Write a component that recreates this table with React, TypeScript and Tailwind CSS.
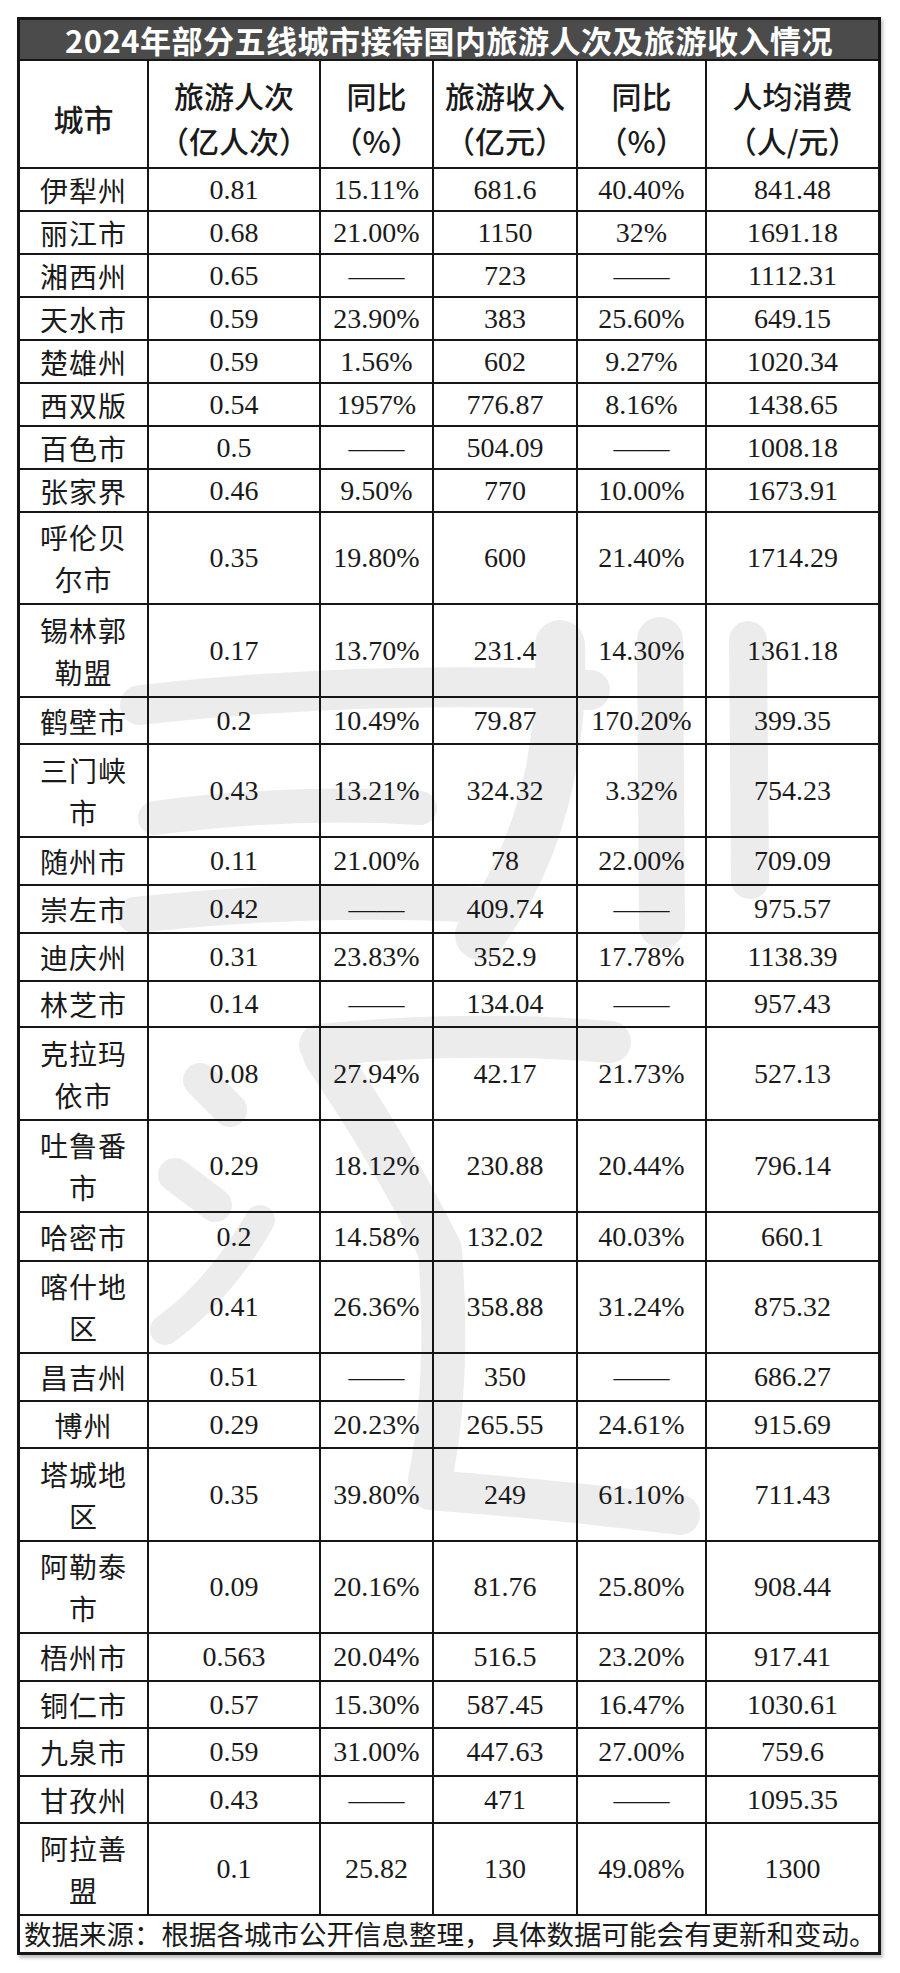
import React from "react";

type Row = { c: string[]; v: string[]; h: string };

const D = "——";

const rows: Row[] = [
  { c: ["伊犁州"], v: ["0.81", "15.11%", "681.6", "40.40%", "841.48"], h: "h-[43px]" },
  { c: ["丽江市"], v: ["0.68", "21.00%", "1150", "32%", "1691.18"], h: "h-[43px]" },
  { c: ["湘西州"], v: ["0.65", D, "723", D, "1112.31"], h: "h-[43px]" },
  { c: ["天水市"], v: ["0.59", "23.90%", "383", "25.60%", "649.15"], h: "h-[43px]" },
  { c: ["楚雄州"], v: ["0.59", "1.56%", "602", "9.27%", "1020.34"], h: "h-[43px]" },
  { c: ["西双版"], v: ["0.54", "1957%", "776.87", "8.16%", "1438.65"], h: "h-[43px]" },
  { c: ["百色市"], v: ["0.5", D, "504.09", D, "1008.18"], h: "h-[43px]" },
  { c: ["张家界"], v: ["0.46", "9.50%", "770", "10.00%", "1673.91"], h: "h-[43px]" },
  { c: ["呼伦贝", "尔市"], v: ["0.35", "19.80%", "600", "21.40%", "1714.29"], h: "h-[92px]" },
  { c: ["锡林郭", "勒盟"], v: ["0.17", "13.70%", "231.4", "14.30%", "1361.18"], h: "h-[93px]" },
  { c: ["鹤壁市"], v: ["0.2", "10.49%", "79.87", "170.20%", "399.35"], h: "h-[47px]" },
  { c: ["三门峡", "市"], v: ["0.43", "13.21%", "324.32", "3.32%", "754.23"], h: "h-[93px]" },
  { c: ["随州市"], v: ["0.11", "21.00%", "78", "22.00%", "709.09"], h: "h-[48px]" },
  { c: ["崇左市"], v: ["0.42", D, "409.74", D, "975.57"], h: "h-[48px]" },
  { c: ["迪庆州"], v: ["0.31", "23.83%", "352.9", "17.78%", "1138.39"], h: "h-[48px]" },
  { c: ["林芝市"], v: ["0.14", D, "134.04", D, "957.43"], h: "h-[46px]" },
  { c: ["克拉玛", "依市"], v: ["0.08", "27.94%", "42.17", "21.73%", "527.13"], h: "h-[93px]" },
  { c: ["吐鲁番", "市"], v: ["0.29", "18.12%", "230.88", "20.44%", "796.14"], h: "h-[92px]" },
  { c: ["哈密市"], v: ["0.2", "14.58%", "132.02", "40.03%", "660.1"], h: "h-[49px]" },
  { c: ["喀什地", "区"], v: ["0.41", "26.36%", "358.88", "31.24%", "875.32"], h: "h-[92px]" },
  { c: ["昌吉州"], v: ["0.51", D, "350", D, "686.27"], h: "h-[48px]" },
  { c: ["博州"], v: ["0.29", "20.23%", "265.55", "24.61%", "915.69"], h: "h-[47px]" },
  { c: ["塔城地", "区"], v: ["0.35", "39.80%", "249", "61.10%", "711.43"], h: "h-[93px]" },
  { c: ["阿勒泰", "市"], v: ["0.09", "20.16%", "81.76", "25.80%", "908.44"], h: "h-[92px]" },
  { c: ["梧州市"], v: ["0.563", "20.04%", "516.5", "23.20%", "917.41"], h: "h-[48px]" },
  { c: ["铜仁市"], v: ["0.57", "15.30%", "587.45", "16.47%", "1030.61"], h: "h-[47px]" },
  { c: ["九泉市"], v: ["0.59", "31.00%", "447.63", "27.00%", "759.6"], h: "h-[48px]" },
  { c: ["甘孜州"], v: ["0.43", D, "471", D, "1095.35"], h: "h-[47px]" },
  { c: ["阿拉善", "盟"], v: ["0.1", "25.82", "130", "49.08%", "1300"], h: "h-[92px]" },
];

const cjk = "font-['Noto_Sans_CJK_SC',sans-serif]";
const num = "font-['Liberation_Serif','Noto_Sans_CJK_SC',serif]";
const grid = "grid grid-cols-[129px_172px_113px_144px_129px_171px]";
const cell = "flex flex-col items-center justify-center border-r-2 border-[#161616]";
const lastCell = "flex flex-col items-center justify-center";

function Watermark() {
  return (
    <svg
      className="absolute left-0 top-0 pointer-events-none"
      width={900}
      height={1973}
      viewBox="0 0 900 1973"
    >
      <g stroke="#ececec" fill="none" strokeLinecap="round" strokeLinejoin="round">
        {/* 三 */}
        <path d="M140 705 Q 360 680 590 690" strokeWidth={40} />
        <path d="M155 818 Q 290 800 420 808" strokeWidth={34} />
        <path d="M135 915 Q 320 895 480 905" strokeWidth={36} />
        {/* 川 */}
        <path d="M560 645 Q 565 820 480 935" strokeWidth={50} />
        <path d="M660 640 L 662 925" strokeWidth={46} />
        <path d="M748 640 L 750 880" strokeWidth={38} />
        {/* 汇 */}
        <path d="M200 1080 L 230 1110" strokeWidth={34} />
        <path d="M175 1175 L 215 1205" strokeWidth={34} />
        <path d="M165 1330 Q 220 1290 260 1220" strokeWidth={30} />
        <path d="M320 1045 Q 470 1030 610 1042" strokeWidth={42} />
        <path d="M325 1055 Q 390 1150 440 1250 Q 450 1380 430 1480" strokeWidth={44} />
        <path d="M430 1490 Q 560 1500 680 1515" strokeWidth={40} />
      </g>
    </svg>
  );
}

export default function App() {
  return (
    <div className="relative w-[900px] h-[1973px] bg-white text-[#1a1a1a]">
      <Watermark />
      <div className="relative pl-[17px] pt-[17px]">
        <div className="w-[864px] border-[3px] border-[#161616] shadow-[2px_3px_3px_rgba(0,0,0,0.25)]">
          {/* title */}
          <div
            className={`h-[41px] bg-[#4b4b4b] border-b-2 border-[#161616] flex items-center justify-center text-white font-bold text-[31px] tracking-[0.5px] leading-none ${cjk}`}
          >
            2024年部分五线城市接待国内旅游人次及旅游收入情况
          </div>
          {/* header */}
          <div className={`${grid} h-[108px] border-b-2 border-[#161616] ${cjk} text-[30px] leading-[45px] font-medium`}>
            <div className={`${cell} pt-[8px]`}>城市</div>
            <div className={`${cell} pt-[8px]`}>
              <span>旅游人次</span>
              <span>（亿人次）</span>
            </div>
            <div className={`${cell} pt-[8px]`}>
              <span>同比</span>
              <span>（%）</span>
            </div>
            <div className={`${cell} pt-[8px]`}>
              <span>旅游收入</span>
              <span>（亿元）</span>
            </div>
            <div className={`${cell} pt-[8px]`}>
              <span>同比</span>
              <span>（%）</span>
            </div>
            <div className={`${lastCell} pt-[8px]`}>
              <span>人均消费</span>
              <span>（人/元）</span>
            </div>
          </div>
          {/* rows */}
          {rows.map((r, i) => (
            <div key={i} className={`${grid} ${r.h} border-b-2 border-[#161616]`}>
              <div className={`${cell} ${cjk} text-[28px] leading-[42px] tracking-[1px]`}>
                {r.c.map((t, j) => (
                  <span key={j}>{t}</span>
                ))}
              </div>
              {r.v.map((t, j) => (
                <div
                  key={j}
                  className={`${j === 4 ? lastCell : cell} ${num} text-[28px] leading-none`}
                >
                  {t}
                </div>
              ))}
            </div>
          ))}
          {/* footer */}
          <div className={`h-[36px] flex items-center pl-[4px] ${cjk} text-[27.5px] leading-none whitespace-nowrap`}>
            数据来源：根据各城市公开信息整理，具体数据可能会有更新和变动。
          </div>
        </div>
      </div>
    </div>
  );
}
